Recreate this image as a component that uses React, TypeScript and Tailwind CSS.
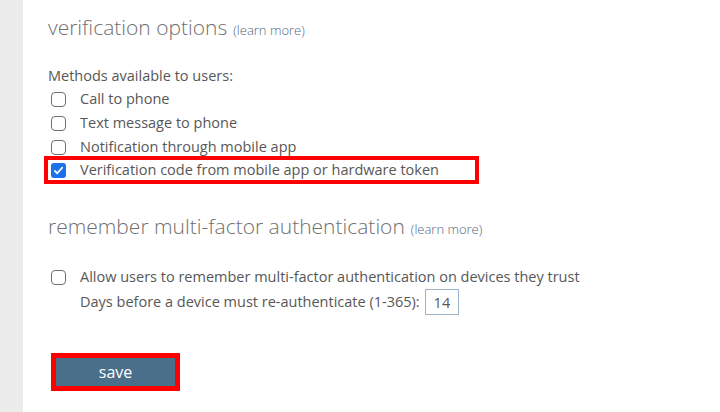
import { useState } from "react";

const Box = ({ checked }: { checked: boolean }) =>
  checked ? (
    <span className="flex h-[15px] w-[15px] shrink-0 items-center justify-center rounded-[3px] bg-[#1a73e8]">
      <svg viewBox="0 0 12 12" className="h-[11px] w-[11px]" fill="none" stroke="white" strokeWidth={2}>
        <path d="M2 6.5l2.6 2.5L10 3" strokeLinecap="round" strokeLinejoin="round" />
      </svg>
    </span>
  ) : (
    <span className="h-[15px] w-[15px] shrink-0 rounded-[4px] border border-[#6f6f6f] bg-white" />
  );

const App = () => {
  const [methods] = useState([
    { label: "Call to phone", on: false },
    { label: "Text message to phone", on: false },
    { label: "Notification through mobile app", on: false },
  ]);

  return (
    <div className="flex h-[412px] w-[720px] bg-white font-['Open_Sans',sans-serif] text-[14.5px] text-[#575757]">
      {/* left rail */}
      <div className="w-[23px] shrink-0 bg-[#ececec]" />

      <div className="flex flex-col pl-[25px]">
        {/* verification options */}
        <div className="mt-[12px] flex h-[32px] items-baseline gap-[6px]">
          <span className="text-[21px] font-light text-[#707070]">verification options</span>
          <a className="text-[13px] font-light text-[#4f6680]">(learn more)</a>
        </div>

        <div className="mt-[22px] h-[20px] leading-[20px]">Methods available to users:</div>
        <div className="mt-[1px] flex flex-col">
          {methods.map((m) => (
            <label key={m.label} className="flex h-[24px] items-center gap-[14px] pl-[3px]">
              <Box checked={m.on} />
              <span>{m.label}</span>
            </label>
          ))}
          <label className="-ml-[4px] -mt-[3px] flex h-[28px] w-[435px] items-center gap-[14px] border-4 border-[#ff0000] pl-[3px]">
            <Box checked />
            <span>Verification code from mobile app or hardware token</span>
          </label>
        </div>

        {/* remember mfa */}
        <div className="mt-[27px] flex h-[32px] items-baseline gap-[6px]">
          <span className="text-[21px] font-light text-[#707070]">remember multi-factor authentication</span>
          <a className="text-[13px] font-light text-[#4f6680]">(learn more)</a>
        </div>

        <label className="mt-[22px] flex h-[24px] items-center gap-[14px] pl-[3px]">
          <Box checked={false} />
          <span>Allow users to remember multi-factor authentication on devices they trust</span>
        </label>
        <div className="flex h-[26px] items-center gap-[5px] pl-[32px]">
          <span>Days before a device must re-authenticate (1-365):</span>
          <input
            defaultValue="14"
            className="h-[26px] w-[34px] border border-[#9bb3c8] px-[8px] text-[14.5px] text-[#575757] outline-none"
          />
        </div>

        <div className="ml-[3px] mt-[38px] w-[129px] border-[5px] border-[#ff0000]">
          <button className="h-[28px] w-full bg-[#4a6f8a] text-[16px] text-white">save</button>
        </div>
      </div>
    </div>
  );
};

export default App;
